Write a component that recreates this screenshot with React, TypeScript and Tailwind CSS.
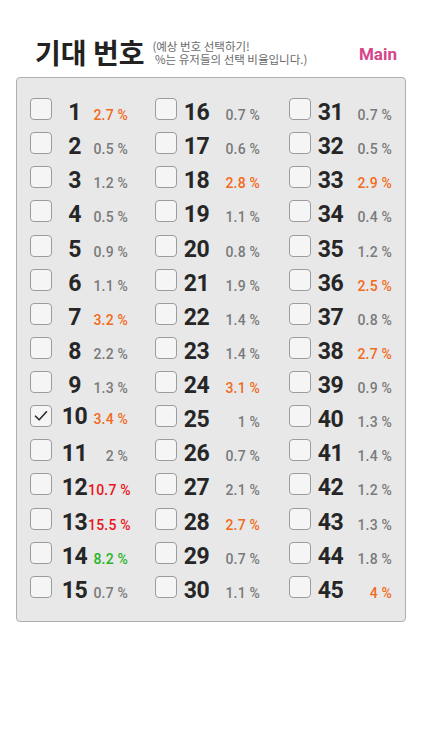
import React from "react";

type Item = { n: number; p: string; c: "g" | "o" | "r" | "gr" };

const data: [number, string, Item["c"]][] = [
  [1, "2.7", "o"], [2, "0.5", "g"], [3, "1.2", "g"], [4, "0.5", "g"], [5, "0.9", "g"],
  [6, "1.1", "g"], [7, "3.2", "o"], [8, "2.2", "g"], [9, "1.3", "g"], [10, "3.4", "o"],
  [11, "2", "g"], [12, "10.7", "r"], [13, "15.5", "r"], [14, "8.2", "gr"], [15, "0.7", "g"],
  [16, "0.7", "g"], [17, "0.6", "g"], [18, "2.8", "o"], [19, "1.1", "g"], [20, "0.8", "g"],
  [21, "1.9", "g"], [22, "1.4", "g"], [23, "1.4", "g"], [24, "3.1", "o"], [25, "1", "g"],
  [26, "0.7", "g"], [27, "2.1", "g"], [28, "2.7", "o"], [29, "0.7", "g"], [30, "1.1", "g"],
  [31, "0.7", "g"], [32, "0.5", "g"], [33, "2.9", "o"], [34, "0.4", "g"], [35, "1.2", "g"],
  [36, "2.5", "o"], [37, "0.8", "g"], [38, "2.7", "o"], [39, "0.9", "g"], [40, "1.3", "g"],
  [41, "1.4", "g"], [42, "1.2", "g"], [43, "1.3", "g"], [44, "1.8", "g"], [45, "4", "o"],
];

const colorClass: Record<Item["c"], string> = {
  g: "text-[#7a7a7a]",
  o: "text-[#f26a1c]",
  r: "text-[#e8141c]",
  gr: "text-[#27b527]",
};

const cols = [
  { w: "w-[98px]", ml: "ml-0", numMl: "ml-[9px]" },
  { w: "w-[105px]", ml: "ml-[27px]", numMl: "ml-[6px]" },
  { w: "w-[103px]", ml: "ml-[29px]", numMl: "ml-[6px]" },
];

function Box({ checked }: { checked: boolean }) {
  return (
    <div className="w-[22px] h-[22px] shrink-0 rounded-[4px] border border-[#9c9c9c] bg-[#f5f5f5] flex items-center justify-center">
      {checked && (
        <svg width="16" height="16" viewBox="0 0 16 16" fill="none">
          <path d="M2.5 8.2 L6.2 11.8 L13.5 3.8" stroke="#2a2a2a" strokeWidth="1.6" strokeLinecap="round" strokeLinejoin="round" />
        </svg>
      )}
    </div>
  );
}

export default function App() {
  return (
    <div className="w-[422px] h-[750px] bg-white" style={{ fontFamily: "Roboto, 'Noto Sans CJK KR', sans-serif" }}>
      <div className="h-[77px] pt-[38px] pl-[35px] pr-[25px] flex items-start">
        <div className="text-[28px] leading-none font-bold text-[#222] whitespace-nowrap" style={{ fontFamily: "'Noto Sans CJK KR', sans-serif" }}>
          기대 번호
        </div>
        <div className="ml-[8px] mt-[2px] text-[11.5px] leading-[13px] text-[#6a6a6a] whitespace-pre" style={{ fontFamily: "'Noto Sans CJK KR', sans-serif" }}>
          {"(예상 번호 선택하기!\n %는 유저들의 선택 비율입니다.)"}
        </div>
        <div className="ml-auto mt-[8px] text-[17px] leading-none font-bold text-[#d5458c]">Main</div>
      </div>
      <div className="ml-[16px] w-[390px] h-[545px] border border-[#aeaeae] rounded-[4px] bg-[#e8e8e8]">
        <div className="flex pl-[13px] pt-[20px]">
          {cols.map((col, ci) => (
            <div key={ci} className={`flex flex-col ${col.w} ${col.ml}`}>
              {data.slice(ci * 15, ci * 15 + 15).map(([n, p, c]) => (
                <div key={n} className="h-[34.14px] flex items-baseline">
                  <Box checked={n === 10} />
                  <div className={`${col.numMl} w-[27px] shrink-0 text-center text-[23px] leading-none font-bold text-[#262626] tracking-[-0.5px]`}>
                    {n}
                  </div>
                  <div className={`flex-1 text-right whitespace-nowrap text-[14px] leading-none font-medium tracking-[0.2px] ${colorClass[c]}`}>
                    {p} %
                  </div>
                </div>
              ))}
            </div>
          ))}
        </div>
      </div>
    </div>
  );
}
